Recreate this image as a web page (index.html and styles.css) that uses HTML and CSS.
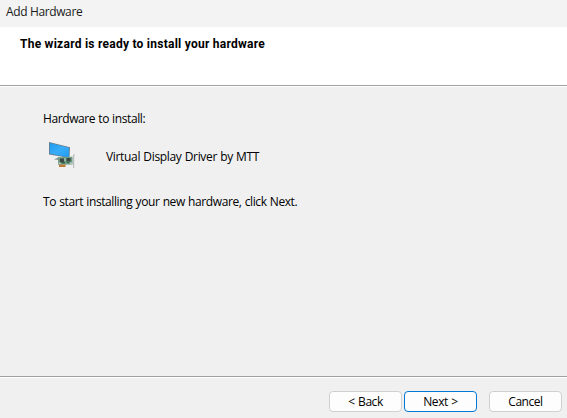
FILE: index.html
```html
<!DOCTYPE html>
<html lang="en">
<head>
<meta charset="utf-8">
<title>Add Hardware</title>
<link rel="stylesheet" href="styles.css">
</head>
<body>
<div class="wizard">
  <div class="titlebar"><span class="caption">Add Hardware</span></div>
  <header class="header"><h1 class="heading">The wizard is ready to install your hardware</h1></header>
  <main class="content">
    <p class="label">Hardware to install:</p>
    <div class="device">
      <svg class="device-icon" width="32" height="32" viewBox="0 0 32 32" aria-hidden="true">
        <defs><linearGradient id="screen" x1="0" y1="0" x2="1" y2="1"><stop offset="0" stop-color="#209af0"/><stop offset=".5" stop-color="#39adf8"/><stop offset="1" stop-color="#209af4"/></linearGradient></defs>
        <path d="M3 4 L24 9.2 L23.5 20 L3 16.5Z" fill="#667c8c"/>
        <path d="M3.9 5 L23 9.8 L22.7 19.2 L3.9 15.8Z" fill="url(#screen)"/>
        <path d="M8 21.5 L13 19 L13 22Z" fill="#8a9699"/>
        <path d="M12 19.2 L26.5 18.7 L26.5 26.5 L12 26.8Z" fill="#6f9a82"/>
        <path d="M14 20.5h4v4h-4zM20.5 20h4v3.5h-4z" fill="#3c4743"/>
        <path d="M18.5 20h1v3h-1zM24 24.5h2v1.5h-2zM12.5 24.5h2v1.5h-2z" fill="#b2d2c1"/>
        <path d="M16 24h3v1.5h-3zM21 24h2v1h-2z" fill="#32684a"/>
        <path d="M13 26.6h6.5v2.4H13z" fill="#c17835"/>
        <path d="M27 17h1.2v13H27z" fill="#b9bdbf"/>
        <path d="M27.5 16.5h1v1h-1z" fill="#93999c"/>
      </svg>
      <span class="device-name">Virtual Display Driver by MTT</span>
    </div>
    <p class="instruction">To start installing your new hardware, click Next.</p>
  </main>
  <footer class="footer">
    <button class="button back">&lt; Back</button>
    <button class="button next">Next &gt;</button>
    <button class="button cancel">Cancel</button>
  </footer>
</div>
</body>
</html>
```
FILE: styles.css
```css
* { box-sizing: border-box; }
body { margin: 0; font: 12px/16px "Open Sans", "Noto Sans", sans-serif; color: #000; overflow: hidden; }
.wizard { width: 567px; height: 418px; display: flex; flex-direction: column; background: #f0f0f0; }
.titlebar { height: 27px; padding: 4px 6px; background: #f3f3f3; color: #1b1b1b; }
.caption { letter-spacing: -.37px; }
.header { height: 60px; padding: 9px 20px; background: #fff; background-image: linear-gradient(#a0a0a0, #a0a0a0); background-size: 100% 1px; background-position: 0 58px; background-repeat: no-repeat; }
.heading { margin: 0; font: bold 12px/16px Roboto, sans-serif; letter-spacing: .25px; white-space: nowrap; }
.content { height: 289px; padding: 24px 43px; }
.label, .instruction { margin: 0; white-space: nowrap; }
.label { letter-spacing: -.4px; word-spacing: .4px; }
.device { display: flex; height: 32px; margin-top: 11px; padding-left: 3px; }
.device-icon { flex: none; }
.device-name { margin: 11px 0 0 28px; letter-spacing: -.33px; word-spacing: .4px; white-space: nowrap; }
.instruction { margin-top: 24px; letter-spacing: -.4px; word-spacing: .5px; }
.footer { height: 42px; display: flex; justify-content: flex-end; padding: 14px 5px 0 0; border-top: 1px solid #a0a0a0; box-shadow: inset 0 1px #fff; }
.button { width: 73px; height: 21px; padding: 0; border: 1px solid #d0d0d0; border-radius: 4px; background: #fdfdfd; color: #000; font: 12px/18px "Open Sans", "Noto Sans", sans-serif; letter-spacing: -.45px; word-spacing: .8px; }
.next { margin-left: 2px; border-color: #0078d4; }
.cancel { margin-left: 12px; }
```
